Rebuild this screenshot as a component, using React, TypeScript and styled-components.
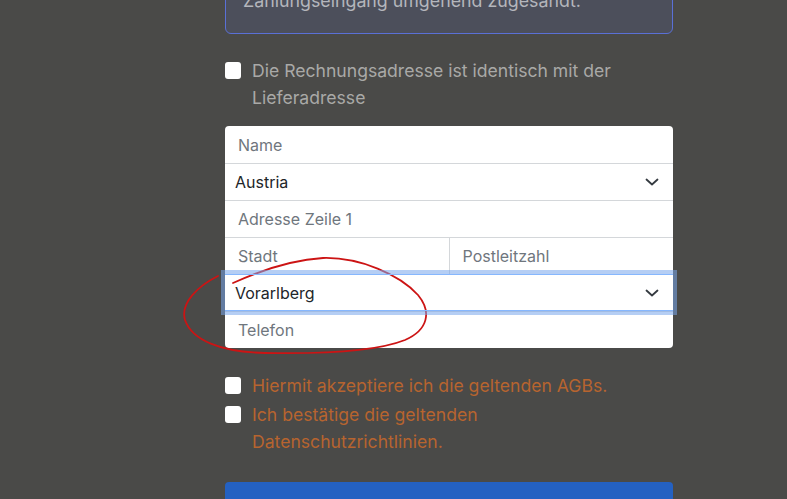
import React from "react";
import styled, { createGlobalStyle } from "styled-components";

const Global = createGlobalStyle`
  html, body { margin: 0; padding: 0; background: #4a4a48; }
  body { font-family: "Inter", "Noto Sans", sans-serif; font-size: 16px; overflow: hidden; }
  * { box-sizing: border-box; }
`;

const Page = styled.div`
  position: relative;
  width: 787px;
  height: 499px;
  overflow: hidden;
`;

const Column = styled.div`
  width: 448px;
  margin-left: 225px;
  margin-top: -27px;
  display: flex;
  flex-direction: column;
`;

const Alert = styled.div`
  background: #4c4f5b;
  border: 1px solid #5a70d6;
  border-radius: 6px;
  padding: 13px 17px 19px;
  color: #b4b6bc;
  font-size: 17.8px;
  line-height: 27px;
  white-space: nowrap;
`;

const CheckRow = styled.label<{ $warn?: boolean; $mt: number }>`
  display: flex;
  align-items: flex-start;
  gap: 11px;
  margin-top: ${(p) => p.$mt}px;
  font-size: 17.6px;
  line-height: 27px;
  color: ${(p) => (p.$warn ? "#b7642f" : "#a9a9a7")};
`;

const Box = styled.span`
  flex: none;
  width: 16px;
  height: 17px;
  margin-top: 5px;
  background: #fff;
  border-radius: 3px;
`;

const Card = styled.div`
  margin-top: 15px;
  background: #fff;
  border-radius: 4px;
  display: flex;
  flex-direction: column;
`;

const Row = styled.div<{ $focus?: boolean }>`
  height: 37px;
  display: flex;
  align-items: center;
  border-top: 1px solid ${(p) => (p.$focus ? "#86b7fe" : "#d4d7da")};
  ${(p) =>
    p.$focus
      ? "border-bottom: 1px solid #86b7fe; box-shadow: 0 0 0 4px rgba(120,165,235,0.55); position: relative; z-index: 1;"
      : ""}
  &:first-child { border-top: none; }
`;

const Field = styled.div<{ $select?: boolean; $divider?: boolean }>`
  flex: 1;
  height: 100%;
  display: flex;
  align-items: center;
  justify-content: space-between;
  padding: 0 14px 0 ${(p) => (p.$select ? 10 : 13)}px;
  color: ${(p) => (p.$select ? "#212529" : "#6f767d")};
  ${(p) => (p.$divider ? "border-right: 1px solid #d4d7da;" : "")}
`;

const Button = styled.div`
  margin-top: 27px;
  height: 40px;
  background: #2461c2;
  border-radius: 4px;
`;

const Annotation = styled.svg`
  position: absolute;
  left: 0;
  top: 0;
  pointer-events: none;
`;

const Chevron = () => (
  <svg width="14" height="10" viewBox="0 0 14 10">
    <path d="M1.5 2.5 L7 7.5 L12.5 2.5" fill="none" stroke="#343a40" strokeWidth="1.8" strokeLinecap="round" strokeLinejoin="round" />
  </svg>
);

export default function App() {
  return (
    <Page>
      <Global />
      <Column>
        <Alert>Zahlungseingang umgehend zugesandt.</Alert>
        <CheckRow $mt={23}>
          <Box />
          <span>Die Rechnungsadresse ist identisch mit der Lieferadresse</span>
        </CheckRow>
        <Card>
          <Row><Field>Name</Field></Row>
          <Row><Field $select>Austria<Chevron /></Field></Row>
          <Row><Field>Adresse Zeile 1</Field></Row>
          <Row>
            <Field $divider>Stadt</Field>
            <Field>Postleitzahl</Field>
          </Row>
          <Row $focus><Field $select>Vorarlberg<Chevron /></Field></Row>
          <Row><Field>Telefon</Field></Row>
        </Card>
        <CheckRow $warn $mt={24}>
          <Box />
          <span>Hiermit akzeptiere ich die geltenden AGBs.</span>
        </CheckRow>
        <CheckRow $warn $mt={2}>
          <Box />
          <span>Ich bestätige die geltenden<br />Datenschutzrichtlinien.</span>
        </CheckRow>
        <Button />
      </Column>
      <Annotation width="787" height="499" viewBox="0 0 787 499">
        <path
          d="M233 283 C 255 273, 290 260, 323 258 C 360 257, 400 275, 418 295 C 432 312, 428 330, 405 340 C 375 352, 320 354, 265 353 C 220 352, 192 340, 185 320 C 180 303, 198 286, 218 276"
          fill="none"
          stroke="#cc1414"
          strokeWidth="1.8"
          strokeLinecap="round"
        />
      </Annotation>
    </Page>
  );
}
